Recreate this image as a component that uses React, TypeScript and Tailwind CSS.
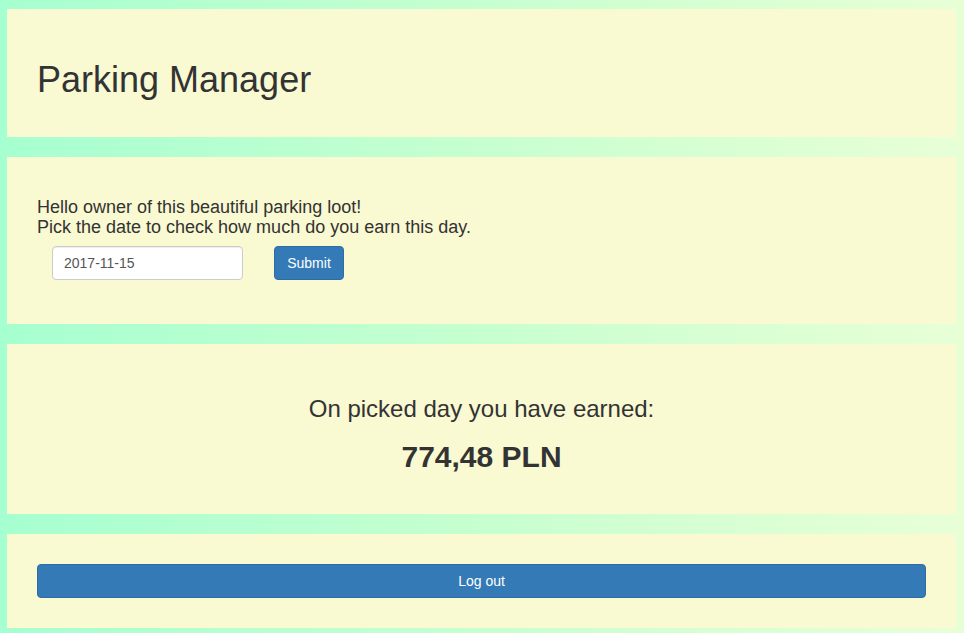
import React from "react";

export default function App() {
  return (
    <div
      className="min-h-[633px] w-full bg-gradient-to-r from-[#a6ffd0] via-[#c6ffd0] to-[#e8ffd6] pt-[9px] pl-[7px] pr-[8px] pb-[5px] text-[#333333]"
      style={{ fontFamily: '"Liberation Sans", Arial, Helvetica, sans-serif' }}
    >
      <div className="flex flex-col gap-[20px]">
        <div className="h-[128px] bg-[#f9f9d2] px-[30px] pt-[51px]">
          <h1 className="text-[36px] leading-[40px] font-normal">Parking Manager</h1>
        </div>

        <div className="h-[167px] bg-[#f9f9d2] px-[30px] pt-[41px]">
          <p className="text-[18px] leading-[19.5px]">
            Hello owner of this beautiful parking loot!
            <br />
            Pick the date to check how much do you earn this day.
          </p>
          <div className="mt-[9px] flex items-center pl-[15px]">
            <div className="flex h-[34px] w-[191px] items-center rounded-[4px] border border-[#cccccc] bg-white px-[11px] text-[14px] text-[#555555] shadow-[inset_0_1px_1px_rgba(0,0,0,0.075)]">
              2017-11-15
            </div>
            <button className="ml-[31px] flex h-[34px] w-[70px] items-center justify-center rounded-[4px] border border-[#2e6da4] bg-[#337ab7] text-[14px] text-white">
              Submit
            </button>
          </div>
        </div>

        <div className="flex h-[170px] flex-col items-center bg-[#f9f9d2] pt-[51px]">
          <div className="text-[24px] leading-[28px]">On picked day you have earned:</div>
          <div className="mt-[17px] text-[30px] font-bold leading-[34px]">774,48 PLN</div>
        </div>

        <div className="h-[94px] bg-[#f9f9d2] px-[30px] pt-[30px]">
          <button className="flex h-[34px] w-full items-center justify-center rounded-[4px] border border-[#2e6da4] bg-[#337ab7] text-[14px] text-white">
            Log out
          </button>
        </div>
      </div>
    </div>
  );
}
